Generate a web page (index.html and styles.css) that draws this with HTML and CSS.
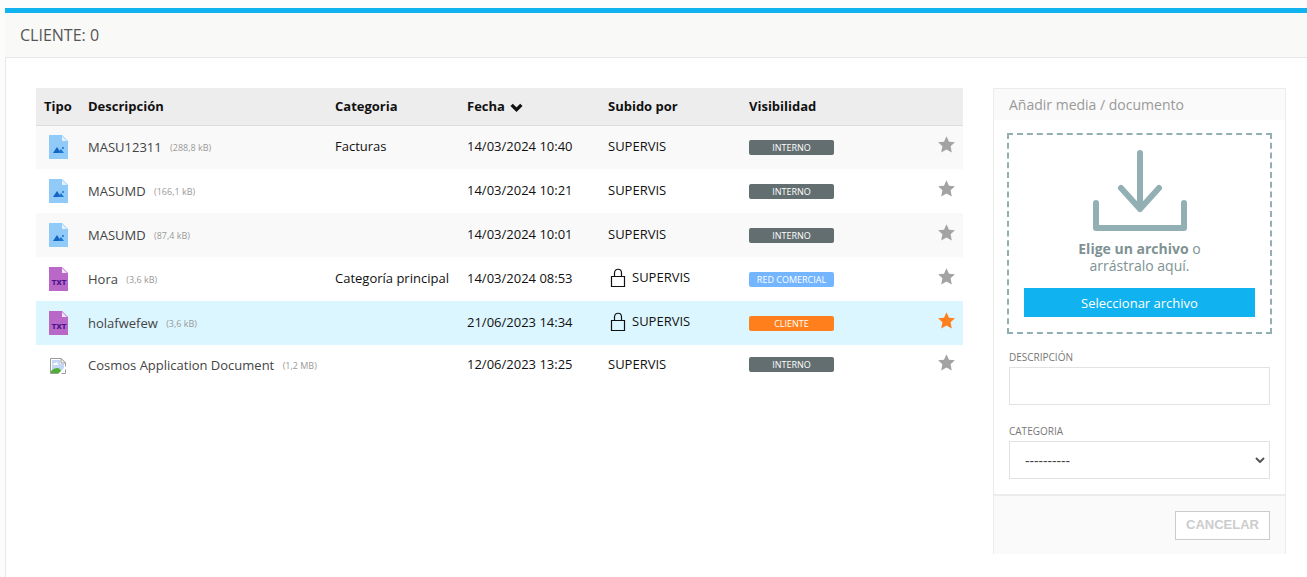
FILE: index.html
```html
<!DOCTYPE html>
<html lang="es">
<head>
  <meta charset="UTF-8" />
  <meta name="viewport" content="width=device-width, initial-scale=1.0"/>
  <title>Cliente - Documentos</title>
  <link rel="stylesheet" href="styles.css">
</head>
<body>
  <!-- Shared icons -->
  <svg class="sprite" aria-hidden="true">
    <symbol id="icon-image" viewBox="0 0 19 24">
      <path d="M0 0H13L19 6V24H0Z" fill="#90caf9"/>
      <path d="M13 1V6H18Z" fill="#e3f2fd"/>
      <path d="M4 18L8 12L12 18Z" fill="#1565c0"/>
      <path d="M9 18L12 14L15 18Z" fill="#1976d2"/>
      <circle cx="14" cy="13" r="1" fill="#1976d2"/>
    </symbol>
    <symbol id="icon-broken" viewBox="0 0 16 16">
      <path d="M0.5 0.5H11L15.5 5V15.5H0.5Z" fill="#fff" stroke="#9a9a9a"/>
      <path d="M2 2H10V6H14V14H2Z" fill="#c3d6f5"/>
      <path d="M3 7Q3 5 5 5Q7 3 8 6Q9 7 8 7Z" fill="#fff"/>
      <path d="M1 15V13Q6 8 10 11L12 15Z" fill="#4fae35"/>
      <path d="M11 0.5V5H15.5Z" fill="#fff" stroke="#9a9a9a"/>
      <path d="M8 16L16 8V11L11 16Z" fill="#fff"/>
    </symbol>
    <symbol id="icon-star" viewBox="0 0 17 17">
      <path d="M8.5 0.3L11 5.7L16.9 6.3L12.6 10.3L13.8 16.4L8.5 13.4L3.2 16.4L4.4 10.3L0.1 6.3L6 5.7Z" fill="currentColor"/>
    </symbol>
    <symbol id="icon-lock" viewBox="0 0 16 20">
      <path d="M1.5 8.5H14.5V18.5H1.5ZM4.5 8.5V5C4.5 0 11.5 0 11.5 5V8.5" fill="none" stroke="#111" stroke-width="1.2"/>
    </symbol>
  </svg>

  <main class="box">
    <header class="box-header">
      <h1>CLIENTE: 0</h1>
    </header>

    <div class="box-content">
      <!-- Documents -->
      <table class="docs">
        <colgroup>
          <col class="col-type">
          <col class="col-desc">
          <col class="col-cat">
          <col class="col-date">
          <col class="col-user">
          <col class="col-vis">
          <col class="col-star">
        </colgroup>
        <thead>
          <tr>
            <th>Tipo</th>
            <th>Descripción</th>
            <th>Categoria</th>
            <th>Fecha <svg class="sort" viewBox="0 0 12 8"><path d="M1.5 1.5L6 6L10.5 1.5" fill="none" stroke="#111" stroke-width="3"/></svg></th>
            <th>Subido por</th>
            <th>Visibilidad</th>
            <th></th>
          </tr>
        </thead>
        <tbody>
          <tr>
            <td><svg class="file"><use href="#icon-image"/></svg></td>
            <td class="desc"><a href="#">MASU12311</a> <small>(288,8 kB)</small></td>
            <td>Facturas</td>
            <td>14/03/2024 10:40</td>
            <td>SUPERVIS</td>
            <td><span class="label">INTERNO</span></td>
            <td><button class="star" aria-label="Destacar"><svg><use href="#icon-star"/></svg></button></td>
          </tr>
          <tr>
            <td><svg class="file"><use href="#icon-image"/></svg></td>
            <td class="desc"><a href="#">MASUMD</a> <small>(166,1 kB)</small></td>
            <td></td>
            <td>14/03/2024 10:21</td>
            <td>SUPERVIS</td>
            <td><span class="label">INTERNO</span></td>
            <td><button class="star" aria-label="Destacar"><svg><use href="#icon-star"/></svg></button></td>
          </tr>
          <tr>
            <td><svg class="file"><use href="#icon-image"/></svg></td>
            <td class="desc"><a href="#">MASUMD</a> <small>(87,4 kB)</small></td>
            <td></td>
            <td>14/03/2024 10:01</td>
            <td>SUPERVIS</td>
            <td><span class="label">INTERNO</span></td>
            <td><button class="star" aria-label="Destacar"><svg><use href="#icon-star"/></svg></button></td>
          </tr>
          <tr>
            <td>
              <svg class="file" viewBox="0 0 19 24">
                <path d="M0 0H13L19 6V24H0Z" fill="#ba68c8"/>
                <path d="M13 1V6H18Z" fill="#f3e5f5"/>
                <text x="10" y="18" text-anchor="middle" class="icon-label">TXT</text>
              </svg>
            </td>
            <td class="desc"><a href="#">Hora</a> <small>(3,6 kB)</small></td>
            <td>Categoría principal</td>
            <td>14/03/2024 08:53</td>
            <td><svg class="lock"><use href="#icon-lock"/></svg>SUPERVIS</td>
            <td><span class="label label-red">RED COMERCIAL</span></td>
            <td><button class="star" aria-label="Destacar"><svg><use href="#icon-star"/></svg></button></td>
          </tr>
          <tr class="featured">
            <td>
              <svg class="file" viewBox="0 0 19 24">
                <path d="M0 0H13L19 6V24H0Z" fill="#ba68c8"/>
                <path d="M13 1V6H18Z" fill="#f3e5f5"/>
                <text x="10" y="18" text-anchor="middle" class="icon-label">TXT</text>
              </svg>
            </td>
            <td class="desc"><a href="#">holafwefew</a> <small>(3,6 kB)</small></td>
            <td></td>
            <td>21/06/2023 14:34</td>
            <td><svg class="lock"><use href="#icon-lock"/></svg>SUPERVIS</td>
            <td><span class="label label-client">CLIENTE</span></td>
            <td><button class="star" aria-label="Quitar destacado"><svg><use href="#icon-star"/></svg></button></td>
          </tr>
          <tr class="compact">
            <td><svg class="broken"><use href="#icon-broken"/></svg></td>
            <td class="desc"><a href="#">Cosmos Application Document</a> <small>(1,2 MB)</small></td>
            <td></td>
            <td>12/06/2023 13:25</td>
            <td>SUPERVIS</td>
            <td><span class="label">INTERNO</span></td>
            <td><button class="star" aria-label="Destacar"><svg><use href="#icon-star"/></svg></button></td>
          </tr>
        </tbody>
      </table>

      <!-- Upload form -->
      <form class="upload">
        <h2>Añadir media / documento</h2>
        <div class="upload-body">
          <div class="dropzone">
            <svg class="drop-icon" viewBox="0 0 96 82" fill="none" stroke="#92b0b3" stroke-width="6" stroke-linecap="round" stroke-linejoin="round">
              <path d="M48 3V59M29 38L48 59L67 38"/>
              <path d="M4 53V78H92V53"/>
            </svg>
            <p><strong>Elige un archivo</strong> o<br>arrástralo aquí.</p>
            <button type="button" class="btn-select">Seleccionar archivo</button>
          </div>
          <div class="field">
            <label for="descripcion">DESCRIPCIÓN</label>
            <input type="text" id="descripcion">
          </div>
          <div class="field">
            <label for="categoria">CATEGORIA</label>
            <div class="select-wrap">
              <select id="categoria">
                <option>----------</option>
              </select>
              <svg class="caret" viewBox="0 0 10 6"><path d="M1 1L5 5L9 1" fill="none" stroke="#555" stroke-width="2"/></svg>
            </div>
          </div>
        </div>
        <footer>
          <button type="button" class="btn-cancel">CANCELAR</button>
        </footer>
      </form>
    </div>
  </main>
</body>
</html>
```
FILE: styles.css
```css
* { box-sizing: border-box; margin: 0; padding: 0; }
body {
  min-height: 100vh;
  padding: 8px 0 0 5px;
  display: flex;
  font-family: 'Open Sans', sans-serif;
  font-size: 13px;
  color: #111;
  background: #fcfcfc;
}
button, input, select { font: inherit; }
.sprite { position: absolute; width: 0; height: 0; }

/* BOX */
.box {
  flex: 1;
  border-top: 5px solid #10b3ef;
  background: #fff;
}
.box-header {
  padding: 10px 15px;
  background: #f9f9f7;
  border-bottom: 1px solid #e7e7e7;
}
.box-header h1 {
  font-size: 16px;
  line-height: 24px;
  font-weight: 400;
  color: #555;
}
.box-content {
  display: grid;
  grid-template-columns: 1fr 293px;
  align-items: start;
  gap: 30px;
  min-height: calc(100vh - 58px);
  padding: 30px 21px 20px 30px;
  border-left: 1px solid #e7e7e7;
}

/* DOCUMENTS TABLE */
.docs {
  width: 100%;
  table-layout: fixed;
  border-collapse: collapse;
}
.col-type { width: 44px; }
.col-desc { width: 247px; }
.col-cat { width: 132px; }
.col-date, .col-user { width: 141px; }
.col-star { width: 33px; }
.docs th {
  height: 37px;
  padding: 0 8px;
  text-align: left;
  font-weight: 700;
  background: #ededed;
  border-bottom: 1px solid #ddd;
  white-space: nowrap;
}
.docs td {
  height: 44px;
  padding: 0 8px 2px;
  white-space: nowrap;
}
.docs td:first-child { padding-bottom: 0; text-align: center; }
.docs .desc { padding-bottom: 0; }
.docs .compact td { height: 39px; }
.docs tbody tr:nth-child(odd) { background: #f9f9f9; }
.docs tbody tr:nth-child(even) { background: #fff; }
.docs tbody tr.featured { background: #dcf6ff; }
.docs a {
  color: #444;
  text-decoration: none;
}
.docs small {
  margin-left: 5px;
  font-size: 9px;
  vertical-align: 1px;
  color: #999;
}
.docs svg { vertical-align: middle; }
.sort { width: 13px; height: 9px; margin-left: 2px; }
.file { width: 19px; height: 24px; }
.broken { width: 16px; height: 16px; }
.docs .lock { width: 16px; height: 20px; margin: 0 6px 0 2px; }
.icon-label {
  font: 900 8px Roboto, sans-serif;
  fill: #4a148c;
}
.label {
  display: block;
  width: 85px;
  margin-top: 2px;
  border-radius: 2px;
  font-size: 9px;
  line-height: 15px;
  text-align: center;
  color: #fff;
  background: #636e70;
}
.label-red { background: #74b5ff; }
.label-client { background: #ff7f1c; }
.star {
  display: block;
  margin-bottom: 3px;
  border: 0;
  background: none;
  color: #a3a3a3;
  cursor: pointer;
}
.star svg { display: block; width: 17px; height: 17px; }
.featured .star { color: #ff7f1c; }

/* UPLOAD FORM */
.upload {
  border: 1px solid #ececec;
  border-bottom: 0;
}
.upload h2 {
  padding: 0 15px;
  font-size: 14px;
  line-height: 31px;
  font-weight: 400;
  color: #999;
  background: #fafafa;
}
.upload-body { padding: 13px 13px 15px; }
.dropzone {
  padding: 15px;
  border: 2px dashed #92b0b3;
  text-align: center;
}
.drop-icon { display: block; width: 96px; height: 82px; margin: 0 auto 8px; }
.dropzone p {
  font-size: 14px;
  line-height: 17px;
  color: #7e9294;
}
.btn-select {
  width: 100%;
  height: 29px;
  margin-top: 14px;
  border: 0;
  color: #fff;
  background: #10b3ef;
  cursor: pointer;
}
.field { margin: 14px 2px 0; }
.field + .field { margin-top: 17px; }
.field label {
  display: block;
  margin-bottom: 1px;
  font-size: 10px;
  line-height: 18px;
  color: #777;
}
.field input, .field select {
  display: block;
  width: 100%;
  height: 38px;
  padding: 0 15px;
  border: 1px solid #e2e2e2;
  background: #fff;
  color: #444;
}
.field select { appearance: none; font-size: 14px; }
.select-wrap { position: relative; }
.caret {
  position: absolute;
  right: 5px;
  top: 16px;
  width: 10px;
  height: 6px;
  pointer-events: none;
}
.upload footer {
  display: flex;
  justify-content: flex-end;
  padding: 15px 15px 14px;
  border-top: 2px solid #ececec;
  background: #fafafa;
}
.btn-cancel {
  height: 29px;
  padding: 0 10px 2px;
  border: 1px solid #ccc;
  font-family: 'Liberation Sans', sans-serif;
  font-weight: 700;
  color: #ccc;
  background: #fff;
  cursor: pointer;
}
```
